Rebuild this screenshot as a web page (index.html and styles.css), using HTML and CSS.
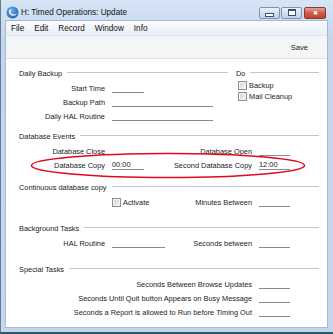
FILE: index.html
```
<!DOCTYPE html>
<html lang="en">
<head>
    <meta charset="UTF-8">
    <title>H: Timed Operations: Update</title>
    <link rel="stylesheet" href="styles.css">
</head>
<body>
<div class="window">
    <div class="titlebar">
        <svg class="app-icon" width="13" height="13" viewBox="0 0 13 13">
            <defs>
                <radialGradient id="icon-fill" cx="0.4" cy="0.35" r="0.7">
                    <stop offset="0" stop-color="#6fb4ef"/>
                    <stop offset="1" stop-color="#1d5fae"/>
                </radialGradient>
            </defs>
            <circle cx="6.5" cy="6.5" r="6" fill="url(#icon-fill)"/>
            <path d="M3.2 4.2 C2.4 7.6 5.2 10.4 8.6 9.6 C10 9.2 10.6 8.2 10.8 7.2 C9.6 8.8 6.4 9 5 7.2 C4.2 6.2 4.4 4.6 5.6 3.6 C4.6 3.4 3.6 3.6 3.2 4.2 Z" fill="#fff"/>
        </svg>
        <span class="title">H: Timed Operations: Update</span>
        <div class="caption-buttons">
            <span class="cap-btn"><span class="glyph-min"></span></span>
            <span class="cap-btn"><span class="glyph-restore"></span></span>
            <span class="cap-btn cap-close">&#x2716;</span>
        </div>
    </div>
    <div class="client">
        <div class="menubar">
            <span>File</span>
            <span>Edit</span>
            <span>Record</span>
            <span>Window</span>
            <span>Info</span>
        </div>
        <div class="toolbar">
            <span class="tool-save">Save</span>
        </div>
        <div class="content">
            <div class="section section-backup">
                <div class="col-main">
                    <div class="heading"><span>Daily Backup</span><span class="rule"></span></div>
                    <div class="row"><span class="lbl">Start Time</span><span class="field field-short"></span></div>
                    <div class="row"><span class="lbl">Backup Path</span><span class="field field-long"></span></div>
                    <div class="row"><span class="lbl">Daily HAL Routine</span><span class="field field-long"></span></div>
                </div>
                <div class="col-do">
                    <div class="heading"><span>Do</span><span class="rule"></span></div>
                    <div class="checks">
                        <div class="check"><span class="box"></span>Backup</div>
                        <div class="check"><span class="box"></span>Mail Cleanup</div>
                    </div>
                </div>
            </div>

            <div class="section section-events wide">
                <div class="heading"><span>Database Events</span><span class="rule"></span></div>
                <div class="row">
                    <span class="lbl">Database Close</span><span class="field-gap"></span>
                    <span class="lbl-right">Database Open</span><span class="field field-right"></span>
                </div>
                <div class="row">
                    <span class="lbl">Database Copy</span><span class="field field-short">00:00</span>
                    <span class="lbl-right">Second Database Copy</span><span class="field field-right">12:00</span>
                </div>
                <svg class="highlight" width="276" height="27" viewBox="0 0 276 27">
                    <ellipse cx="138" cy="13.5" rx="136.5" ry="12" fill="none" stroke="#e2091e" stroke-width="1.6"/>
                </svg>
            </div>

            <div class="section section-continuous wide">
                <div class="heading"><span>Continuous database copy</span><span class="rule"></span></div>
                <div class="row">
                    <span class="lbl"></span>
                    <span class="check check-inline"><span class="box"></span>Activate</span>
                    <span class="lbl-right">Minutes Between</span><span class="field field-right"></span>
                </div>
            </div>

            <div class="section section-background wide">
                <div class="heading"><span>Background Tasks</span><span class="rule"></span></div>
                <div class="row">
                    <span class="lbl">HAL Routine</span><span class="field field-mid"></span>
                    <span class="lbl-right">Seconds between</span><span class="field field-right"></span>
                </div>
            </div>

            <div class="section section-special wide">
                <div class="heading"><span>Special Tasks</span><span class="rule"></span></div>
                <div class="row"><span class="lbl-right">Seconds Between Browse Updates</span><span class="field field-right"></span></div>
                <div class="row"><span class="lbl-right">Seconds Until Quit button Appears on Busy Message</span><span class="field field-right"></span></div>
                <div class="row"><span class="lbl-right">Seconds a Report is allowed to Run before Timing Out</span><span class="field field-right"></span></div>
            </div>
        </div>
    </div>
</div>
</body>
</html>
```

FILE: styles.css
```
body {
    margin: 0;
    padding: 0;
    background: #2b5b6b;
    font-family: "Liberation Sans", Arial, sans-serif;
    color: #1b1b1b;
}
.window {
    width: 333px;
    height: 334px;
    box-sizing: border-box;
    padding: 0 5px 3px 4px;
    border-left: 1px solid #6b7a8b;
    border-bottom: 2px solid #2b5b6b;
    background: linear-gradient(#d6e5f6, #c2d6ee 40px, #c4d7ef);
}
.titlebar {
    height: 15px;
    padding: 5px 2px 0 1px;
    display: flex;
    align-items: center;
}
.app-icon {
    display: block;
}
.title {
    margin-left: 2px;
    font-size: 8.2px;
    color: #111;
}
.caption-buttons {
    margin-left: auto;
    display: flex;
    gap: 1px;
}
.cap-btn {
    width: 21px;
    height: 12px;
    box-sizing: border-box;
    border: 1px solid #7f93ae;
    border-radius: 2px;
    background: linear-gradient(#eef3fa, #d3dfee 50%, #c3d2e6);
    display: flex;
    align-items: center;
    justify-content: center;
}
.cap-close {
    width: 22px;
    margin-left: 1px;
    border-color: #8a3a34;
    background: linear-gradient(#e6a196, #cf5b4c 50%, #c24233);
    color: #fff;
    font-size: 6px;
    line-height: 1;
}
.glyph-min {
    width: 7px;
    height: 2px;
    margin-top: 4px;
    background: #fff;
    border: 1px solid #3c4f69;
}
.glyph-restore {
    width: 6px;
    height: 4px;
    border: 1px solid #3c4f69;
    border-top-width: 2px;
    background: #fff;
}
.client {
    height: 306px;
    border: 1px solid #a5b9d2;
    background: #fff;
    display: flex;
    flex-direction: column;
}
.menubar {
    height: 14px;
    padding-left: 5px;
    display: flex;
    align-items: center;
    gap: 10px;
    font-size: 8.2px;
    color: #111;
    background: linear-gradient(#fafcfe, #e9eff7);
    border-bottom: 1px solid #dde5ef;
}
.toolbar {
    height: 22px;
    padding-right: 19px;
    display: flex;
    align-items: center;
    justify-content: flex-end;
    background: #f4f5f6;
    border-bottom: 1px solid #e2e2e2;
}
.tool-save {
    font-size: 7.6px;
}
.content {
    position: relative;
    flex: 1;
    padding: 7px 8px 0 13px;
    font-size: 7.4px;
}
.section {
    position: relative;
}
.section-backup {
    display: flex;
    gap: 8px;
}
.section-events {
    margin-top: 6px;
}
.section-continuous {
    margin-top: 8px;
}
.section-background {
    margin-top: 12px;
}
.section-special {
    margin-top: 12px;
}
.col-main {
    width: 209px;
}
.col-do {
    flex: 1;
}
.heading {
    height: 14px;
    margin-bottom: 1px;
    display: flex;
    align-items: center;
    gap: 5px;
}
.rule {
    flex: 1;
    margin-top: -1px;
    border-top: 1px solid #c6c6c6;
}
.row {
    height: 14px;
    display: flex;
    align-items: center;
}
.wide .row {
    width: 271px;
}
.lbl {
    width: 86px;
    flex-shrink: 0;
    text-align: right;
    white-space: nowrap;
}
.lbl-right {
    flex: 1;
    text-align: right;
    white-space: nowrap;
}
.field {
    height: 10px;
    line-height: 10px;
    margin-left: 7px;
    flex-shrink: 0;
    box-sizing: border-box;
    border-bottom: 1px solid #8a8a8a;
}
.field-short {
    width: 32px;
}
.field-mid {
    width: 53px;
}
.field-long {
    width: 101px;
}
.field-right {
    width: 31px;
}
.field-gap {
    width: 39px;
    flex-shrink: 0;
}
.checks {
    margin-top: -1px;
}
.check {
    height: 11px;
    display: flex;
    align-items: center;
    padding-left: 2px;
}
.check-inline {
    height: 14px;
    padding-left: 7px;
}
.box {
    width: 9px;
    height: 9px;
    margin-right: 2px;
    box-sizing: border-box;
    border: 1px solid #8f8f8f;
    box-shadow: inset 0 0 0 1px #f3f3f3;
    background: linear-gradient(135deg, #d3d3d3, #f6f6f6);
}
.highlight {
    position: absolute;
    left: 11px;
    top: 23px;
}
```
